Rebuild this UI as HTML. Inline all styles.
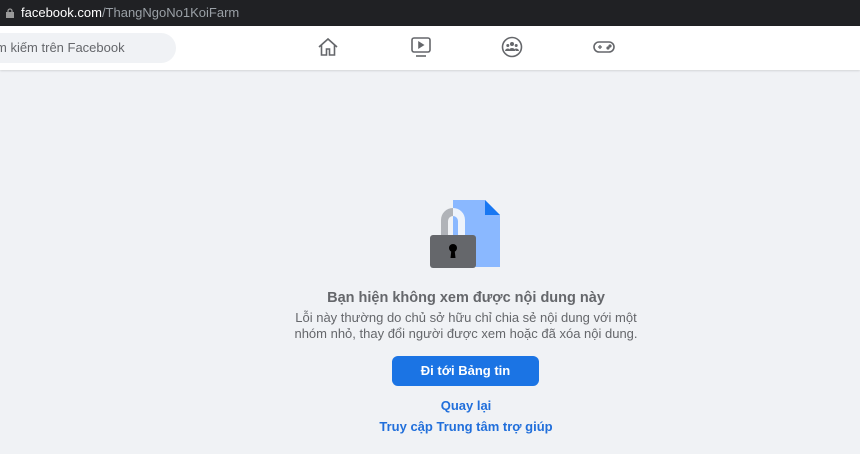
<!DOCTYPE html>
<html><head><meta charset="utf-8"><style>
body{margin:0;width:860px;height:454px;background:#f0f2f5;font-family:"Liberation Sans",Helvetica,sans-serif;overflow:hidden;position:relative}
.url{position:absolute;left:0;top:0;width:860px;height:26px;background:#202124;color:#fff;font-size:13px}
.url span{position:absolute;left:21px;top:5px}
.nav{position:absolute;left:0;top:26px;width:860px;height:44px;background:#fff;box-shadow:0 1px 2px rgba(0,0,0,.12)}
.search{position:absolute;left:-20px;top:7px;width:196px;height:30px;border-radius:15px;background:#f0f2f5;color:#65676b;font-size:13px;line-height:30px;padding-left:16px;box-sizing:border-box}
.ic{position:absolute;top:10px}
.c{position:absolute;left:0;width:932px;text-align:center}
.btn{position:absolute;left:392px;top:356px;width:147px;height:30px;background:#1b74e4;border-radius:6px;color:#fff;font-weight:bold;font-size:13px;text-align:center;line-height:30px}
a{color:#216fdb;font-weight:bold;font-size:13px;text-decoration:none}
</style></head><body>
<div class="url"><svg style="position:absolute;left:6px;top:8px" width="8" height="10"><rect x="0" y="4" width="8" height="6" fill="#999"/><path d="M2 4V3a2 2 0 0 1 4 0v1" stroke="#999" fill="none" stroke-width="1.3"/></svg><span>facebook.com<span style="position:static;color:#9aa0a6">/ThangNgoNo1KoiFarm</span></span></div>
<div class="nav">
<div class="search">m kiếm trên Facebook</div>
<svg class="ic" style="left:317px" width="22" height="22" viewBox="0 0 22 22" fill="none" stroke="#65676b" stroke-width="1.6"><path d="M2 11L11 3l9 8M4.5 9v10h5v-6h3v6h5V9"/></svg>
<svg class="ic" style="left:410px" width="22" height="22" viewBox="0 0 22 22" fill="none" stroke="#65676b" stroke-width="1.6"><rect x="2" y="2" width="18" height="14" rx="2"/><path d="M6 20h10"/><path d="M9 6.5v5l4-2.5z" fill="#65676b"/></svg>
<svg class="ic" style="left:501px" width="22" height="22" viewBox="0 0 22 22"><circle cx="11" cy="11" r="9.5" fill="none" stroke="#65676b" stroke-width="1.6"/><circle cx="11" cy="8" r="2" fill="#65676b"/><circle cx="6.8" cy="9.5" r="1.5" fill="#65676b"/><circle cx="15.2" cy="9.5" r="1.5" fill="#65676b"/><path d="M7.5 15a3.5 3 0 0 1 7 0z M4 15a2.8 2.5 0 0 1 4-2.2V15z M18 15a2.8 2.5 0 0 0-4-2.2V15z" fill="#65676b"/></svg>
<svg class="ic" style="left:592px" width="24" height="22" viewBox="0 0 24 22" fill="none" stroke="#65676b" stroke-width="1.6"><rect x="2" y="6" width="20" height="10" rx="5"/><path d="M6 11h4M8 9v4" stroke-width="1.3"/><circle cx="16" cy="12" r=".8" fill="#65676b"/><circle cx="18" cy="10" r=".8" fill="#65676b"/></svg>
</div>
<svg style="position:absolute;left:425px;top:198px" width="80" height="74" viewBox="0 0 80 74">
<path d="M28 2h32l15 15v52H28z" fill="#8ab8ff"/><path d="M60 2l15 15H60z" fill="#1877f2"/>
<path d="M16 38V22a12 12 0 0 1 12-12V18a5 5 0 0 0-5 5v15z" fill="#b0b3b8"/>
<path d="M28 10a12 12 0 0 1 12 12v16h-7V23a5 5 0 0 0-5-5z" fill="#eef3fb"/>
<rect x="5" y="37" width="46" height="33" rx="3" fill="#65676b"/>
<circle cx="28" cy="50" r="4" fill="#000"/><path d="M26.5 51h3l1 9h-5z" fill="#000"/>
</svg>
<div class="c" style="top:290px;font-size:14.5px;font-weight:bold;color:#65676b">Bạn hiện không xem được nội dung này</div>
<div class="c" style="top:310px;font-size:13px;line-height:16px;color:#65676b">Lỗi này thường do chủ sở hữu chỉ chia sẻ nội dung với một<br>nhóm nhỏ, thay đổi người được xem hoặc đã xóa nội dung.</div>
<div class="btn">Đi tới Bảng tin</div>
<div class="c" style="top:397px"><a>Quay lại</a></div>
<div class="c" style="top:418px"><a>Truy cập Trung tâm trợ giúp</a></div>
</body></html>
